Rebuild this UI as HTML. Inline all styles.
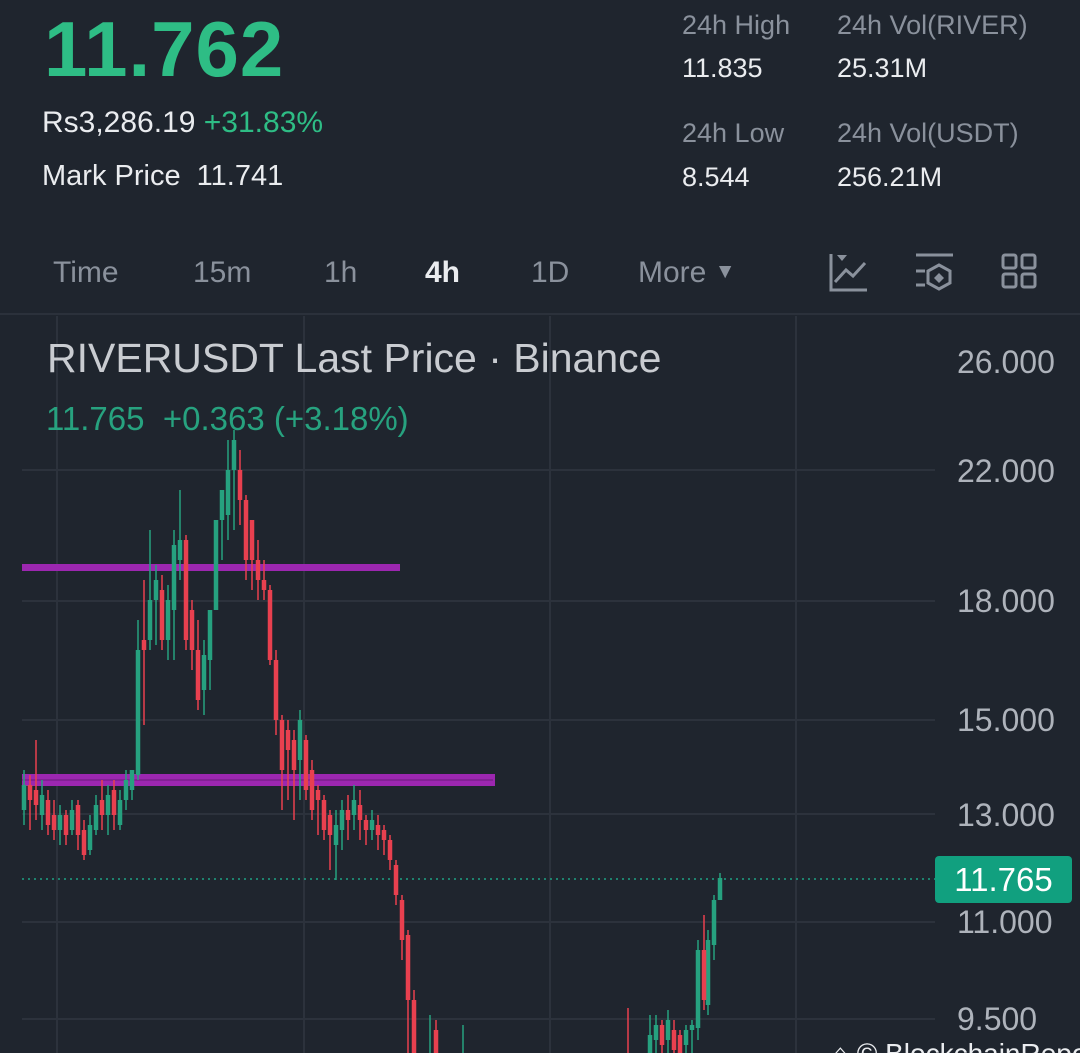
<!DOCTYPE html>
<html style="overflow:hidden;height:1053px"><head><meta charset="utf-8"><style>
*{margin:0;padding:0;box-sizing:border-box}
body{width:1080px;height:1053px;overflow:hidden;background:#1f252e;font-family:"Liberation Sans",sans-serif;position:relative}
.a{position:absolute;white-space:nowrap}
.g{color:#2ebd85}
.lbl{color:#8a919c;font-size:27px}
.val{color:#eaecef;font-size:27px}
.tab{color:#8a919c;font-size:30px;top:256px}
.ax{color:#aeb3bb;font-size:32px;left:957px}
</style></head><body>
<div class="a g" style="left:44px;top:4px;font-size:78px;font-weight:bold;letter-spacing:1px">11.762</div>
<div class="a" style="left:42px;top:106px;font-size:30px;color:#eaecef">Rs3,286.19 <span class="g">+31.83%</span></div>
<div class="a" style="left:42px;top:160px;font-size:29px;color:#eaecef">Mark Price&nbsp; 11.741</div>
<div class="a lbl" style="left:682px;top:10px">24h High</div>
<div class="a val" style="left:682px;top:53px">11.835</div>
<div class="a lbl" style="left:837px;top:10px">24h Vol(RIVER)</div>
<div class="a val" style="left:837px;top:53px">25.31M</div>
<div class="a lbl" style="left:682px;top:118px">24h Low</div>
<div class="a val" style="left:682px;top:162px">8.544</div>
<div class="a lbl" style="left:837px;top:118px">24h Vol(USDT)</div>
<div class="a val" style="left:837px;top:162px">256.21M</div>
<div class="a tab" style="left:53px">Time</div>
<div class="a tab" style="left:193px">15m</div>
<div class="a tab" style="left:324px">1h</div>
<div class="a tab" style="left:425px;color:#eaecef;font-weight:bold">4h</div>
<div class="a tab" style="left:531px">1D</div>
<div class="a tab" style="left:638px">More <span style="font-size:21px;position:relative;top:-4px">▼</span></div>
<svg class="a" style="left:0;top:0" width="1080" height="1053">
<g stroke="#8a919c" stroke-width="3" fill="none">
<path d="M831 254V290H867"/><path d="M835 282L846 270L853 276L865 263"/>
<path d="M916 255H953M916 271H925M916 285H925"/>
<path d="M939 265L950 271V283L939 289L928 283V271Z"/>
<rect x="1003" y="255" width="13" height="13" rx="2"/><rect x="1022" y="255" width="13" height="13" rx="2"/>
<rect x="1003" y="274" width="13" height="13" rx="2"/><rect x="1022" y="274" width="13" height="13" rx="2"/>
</g>
<path d="M837 255L847 255L842 261Z" fill="#8a919c"/>
<path d="M939 273L944 278L939 283L934 278Z" fill="#8a919c"/>
<line x1="0" y1="314" x2="1080" y2="314" stroke="#2b313b" stroke-width="2"/>
<g stroke="#2c323c" stroke-width="2">
<path d="M57 316V1053M304 316V1053M550 316V1053M796 316V1053"/>
<path d="M22 470H935M22 601H935M22 720H935M22 814H935M22 922H935M22 1019H935"/>
</g>
<line x1="22" y1="879" x2="935" y2="879" stroke="#1fa283" stroke-width="1.5" stroke-dasharray="2 4"/>
<rect x="22" y="564" width="378" height="7" fill="#9c27b0"/>
<rect x="22" y="774" width="473" height="12" fill="#9c27b0"/>
<line x1="22" y1="780" x2="493" y2="780" stroke="#6a1b7a" stroke-width="1"/>
<g stroke="#26a17f" fill="none">
<path stroke-width="1.5" d="M24 770V825M42 780V830M60 805V845M72 800V835M90 815V855M96 795V835M108 785V835M120 790V830M126 770V810M132 770V800M138 620V780M150 530V650M156 565V645M168 585V660M174 530V660M180 490V580M204 640V715M210 610V690M216 520V605M222 490V560M228 440V540M234 430V530M300 710V800M336 810V880M342 800V850M354 785V830M372 810V840M430 1015V1053M463 1025V1053M650 1015V1053M656 1015V1053M668 1010V1053M686 1025V1053M692 1020V1053M698 940V1040M708 930V1015M714 895V960M720 873V900"/>
<path stroke-width="4.5" d="M24 810V785M42 815V795M60 830V815M72 830V810M90 850V825M96 830V805M108 815V795M120 825V800M126 800V780M132 790V770M138 775V650M150 640V600M156 600V580M168 640V600M174 610V545M180 560V540M204 690V655M210 660V610M216 610V520M222 520V490M228 515V470M234 470V440M300 760V720M336 845V825M342 830V810M354 815V800M372 830V820M650 1053V1035M656 1040V1025M668 1040V1020M686 1045V1030M692 1030V1025M698 1028V950M708 1005V940M714 945V900M720 900V878"/>
</g>
<g stroke="#e8404f" fill="none">
<path stroke-width="1.5" d="M30 775V830M36 740V820M48 790V835M54 800V840M66 810V845M78 800V850M84 820V860M102 780V830M114 780V830M144 580V725M162 575V650M186 535V650M192 600V670M198 620V710M240 450V525M246 495V580M252 520V590M258 540V600M264 560V600M270 585V665M276 650V735M282 715V810M288 720V800M294 730V820M306 735V800M312 760V820M318 785V835M324 795V840M330 810V870M348 795V840M360 790V840M366 815V845M378 815V850M384 825V855M390 835V870M396 860V905M402 895V960M408 930V1053M414 990V1053M436 1020V1053M628 1008V1053M662 1020V1053M674 1020V1053M680 1030V1053M704 915V1010"/>
<path stroke-width="4.5" d="M30 785V800M36 790V805M48 800V825M54 815V830M66 815V835M78 805V835M84 830V855M102 800V815M114 790V815M144 640V650M162 590V640M186 540V640M192 610V650M198 650V700M240 470V500M246 500V560M252 520V560M258 560V580M264 580V590M270 590V660M276 660V720M282 720V770M288 730V750M294 740V770M306 740V790M312 770V810M318 790V800M324 800V830M330 815V835M348 810V820M360 805V820M366 820V830M378 825V835M384 830V840M390 840V860M396 865V895M402 900V940M408 935V1000M414 1000V1053M436 1030V1053M662 1025V1045M674 1030V1050M680 1035V1053M704 950V1000"/>
</g>
</svg>
<div class="a" style="left:47px;top:335px;font-size:41px;color:#c9ccd1">RIVERUSDT Last Price · Binance</div>
<div class="a" style="left:46px;top:400px;font-size:33px;color:#27a27f">11.765&nbsp; +0.363 (+3.18%)</div>
<div class="a ax" style="top:344px">26.000</div>
<div class="a ax" style="top:453px">22.000</div>
<div class="a ax" style="top:583px">18.000</div>
<div class="a ax" style="top:702px">15.000</div>
<div class="a ax" style="top:797px">13.000</div>
<div class="a ax" style="top:904px">11.000</div>
<div class="a ax" style="top:1001px">9.500</div>
<div class="a" style="left:935px;top:856px;width:137px;height:47px;background:#11a07f;border-radius:4px;color:#fff;font-size:33px;text-align:center;line-height:47px">11.765</div>
<div style="position:absolute;left:832px;top:1036px;width:248px;height:17px;overflow:hidden"><div class="a" style="left:0;top:2px;font-size:28px;color:#eaecef">⌂ © BlockchainReporter</div></div>
</body></html>
